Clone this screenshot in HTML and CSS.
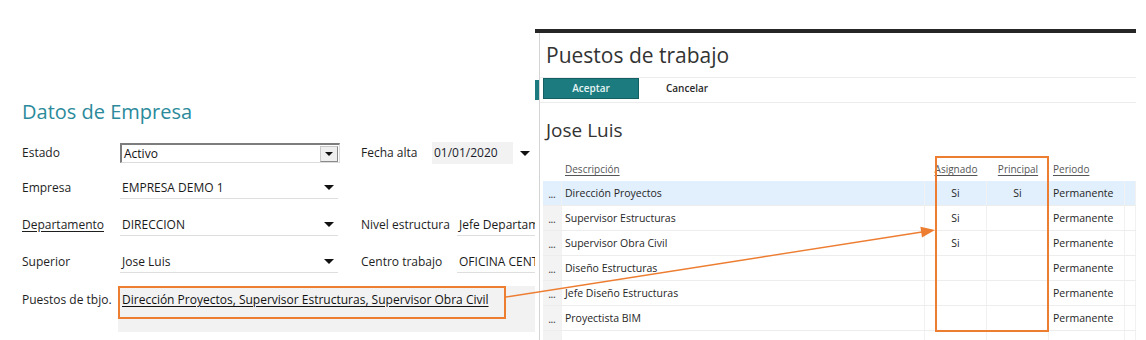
FILE: index.html
```html
<!DOCTYPE html>
<html lang="es">
<head>
<meta charset="utf-8">
<title>Puestos de trabajo</title>
<link rel="stylesheet" href="styles.css">
</head>
<body>
<div class="page">
  <section class="form">
    <h2 class="form-title">Datos de Empresa</h2>

    <div class="row row-1">
      <span class="label">Estado</span>
      <div class="select">
        <span class="select-value">Activo</span>
        <span class="select-btn"><i class="tri tri-sm"></i></span>
      </div>
      <span class="label label-2 label-fecha">Fecha alta</span>
      <div class="date">01/01/2020</div>
      <i class="tri date-tri"></i>
    </div>

    <div class="row">
      <span class="label">Empresa</span>
      <div class="field"><span>EMPRESA DEMO 1</span><i class="tri"></i></div>
    </div>

    <div class="row">
      <span class="label label-link">Departamento</span>
      <div class="field"><span>DIRECCION</span><i class="tri"></i></div>
      <span class="label label-2">Nivel estructura</span>
      <div class="field field-2"><span>Jefe Departamento</span></div>
    </div>

    <div class="row">
      <span class="label">Superior</span>
      <div class="field"><span>Jose Luis</span><i class="tri"></i></div>
      <span class="label label-2">Centro trabajo</span>
      <div class="field field-2"><span>OFICINA CENTRAL</span></div>
    </div>

    <div class="row row-puestos">
      <span class="label label-puestos">Puestos de tbjo.</span>
      <div class="puestos-box">
        <a class="puestos-link">Dirección Proyectos, Supervisor Estructuras, Supervisor Obra Civil</a>
      </div>
    </div>
  </section>

  <section class="dialog">
    <div class="dialog-panel">
      <h1 class="dialog-title">Puestos de trabajo</h1>
      <div class="toolbar">
        <button class="btn btn-primary">Aceptar</button>
        <button class="btn">Cancelar</button>
      </div>
      <h2 class="person">Jose Luis</h2>
      <div class="grid">
        <div class="tr th">
          <span class="td"></span>
          <span class="td"><u>Descripción</u></span>
          <span class="td c"><u>Asignado</u></span>
          <span class="td c"><u>Principal</u></span>
          <span class="td p"><u>Periodo</u></span>
          <span class="td"></span>
        </div>
        <div class="tr sel">
          <span class="td h">...</span>
          <span class="td">Dirección Proyectos</span>
          <span class="td c">Si</span>
          <span class="td c">Si</span>
          <span class="td p">Permanente</span>
          <span class="td"></span>
        </div>
        <div class="tr">
          <span class="td h">...</span>
          <span class="td">Supervisor Estructuras</span>
          <span class="td c">Si</span>
          <span class="td c"></span>
          <span class="td p">Permanente</span>
          <span class="td"></span>
        </div>
        <div class="tr">
          <span class="td h">...</span>
          <span class="td">Supervisor Obra Civil</span>
          <span class="td c">Si</span>
          <span class="td c"></span>
          <span class="td p">Permanente</span>
          <span class="td"></span>
        </div>
        <div class="tr">
          <span class="td h">...</span>
          <span class="td">Diseño Estructuras</span>
          <span class="td c"></span>
          <span class="td c"></span>
          <span class="td p">Permanente</span>
          <span class="td"></span>
        </div>
        <div class="tr">
          <span class="td h">...</span>
          <span class="td">Jefe Diseño Estructuras</span>
          <span class="td c"></span>
          <span class="td c"></span>
          <span class="td p">Permanente</span>
          <span class="td"></span>
        </div>
        <div class="tr">
          <span class="td h">...</span>
          <span class="td">Proyectista BIM</span>
          <span class="td c"></span>
          <span class="td c"></span>
          <span class="td p">Permanente</span>
          <span class="td"></span>
        </div>
        <div class="tr">
          <span class="td h"></span>
          <span class="td"></span>
          <span class="td c"></span>
          <span class="td c"></span>
          <span class="td p"></span>
          <span class="td"></span>
        </div>
      </div>
    </div>
  </section>

  <svg class="annot" width="1146" height="340" viewBox="0 0 1146 340" aria-hidden="true">
    <rect x="119" y="287" width="386" height="31" fill="none" stroke="#ed7d31" stroke-width="2"/>
    <rect x="936" y="157" width="112" height="174" fill="none" stroke="#ed7d31" stroke-width="2"/>
    <line x1="506" y1="297" x2="922" y2="232" stroke="#ed7d31" stroke-width="1.4"/>
    <polygon points="935,230 920.4,226.8 922,237.6" fill="#ed7d31"/>
  </svg>
</div>
</body>
</html>
```

FILE: styles.css
```css
* { box-sizing: border-box; }

html, body {
  margin: 0;
  padding: 0;
  background: #fff;
}

body {
  font-family: "Open Sans", "Noto Sans", sans-serif;
  color: #222;
  width: 1146px;
  height: 340px;
  overflow: hidden;
}

.page {
  position: relative;
  width: 1146px;
  height: 340px;
  overflow: hidden;
}

/* ---------- left form ---------- */
.form {
  padding: 98px 0 0 22px;
  width: 640px;
}

.form-title {
  margin: 0;
  font-size: 20px;
  line-height: 28px;
  font-weight: 400;
  color: #2b8a9b;
  height: 28px;
}

.row {
  display: flex;
  align-items: center;
  height: 37px;
  font-size: 12px;
}

.row-1 {
  margin-top: 11px;
  height: 32px;
}

.label {
  width: 98px;
  flex: none;
  color: #1e1e1e;
  line-height: 16px;
}

.label-link {
  text-decoration: underline;
  text-underline-offset: 2px;
}

.label-2 {
  margin-left: 23px;
}

.label-fecha {
  margin-left: 21px;
  width: 71px;
}

.select {
  width: 220px;
  height: 20px;
  flex: none;
  display: flex;
  align-items: center;
  justify-content: space-between;
  border-top: 2px solid #7d7d7d;
  border-left: 2px solid #7d7d7d;
  border-right: 1px solid #dcdcdc;
  border-bottom: 1px solid #dcdcdc;
  padding-left: 2px;
  color: #111;
}

.select-btn {
  width: 18px;
  height: 16px;
  margin-right: 1px;
  background: #efefef;
  border: 1px solid #c9c9c9;
  border-right-color: #8a8a8a;
  border-bottom-color: #8a8a8a;
  display: flex;
  align-items: center;
  justify-content: center;
}

.tri {
  display: block;
  width: 0;
  height: 0;
  border-left: 5px solid transparent;
  border-right: 5px solid transparent;
  border-top: 5px solid #111;
}

.tri-sm {
  border-left-width: 4px;
  border-right-width: 4px;
  border-top-width: 4px;
}

.date {
  width: 81px;
  height: 22px;
  flex: none;
  background: #f2f2f2;
  padding-left: 2px;
  line-height: 22px;
  color: #1c1c2c;
}

.date-tri {
  margin-left: 7px;
}

.field {
  width: 218px;
  height: 22px;
  flex: none;
  display: flex;
  align-items: center;
  justify-content: space-between;
  padding: 0 4px 0 2px;
  border-bottom: 1px solid #dedede;
  color: #1a1a1a;
}

.field-2 {
  width: 78px;
  margin-left: -2px;
  white-space: nowrap;
  overflow: hidden;
  justify-content: flex-start;
  padding-right: 0;
}

.field-2 span {
  flex: none;
}

.row-puestos {
  margin-top: 6px;
  height: 46px;
  align-items: flex-start;
}

.label-puestos {
  width: 96px;
  padding-top: 6px;
}

.puestos-box {
  width: 417px;
  height: 46px;
  background: #f2f2f2;
  padding: 6px 0 0 4px;
  line-height: 16px;
}

.puestos-link {
  color: #111;
  text-decoration: underline;
  text-underline-offset: 2px;
  white-space: nowrap;
}

/* ---------- dialog ---------- */
.dialog {
  position: absolute;
  left: 535px;
  top: 29px;
  width: 601px;
  height: 311px;
  border-top: 4px solid #262626;
}

.dialog::before {
  content: "";
  position: absolute;
  left: 0;
  top: 47px;
  width: 4px;
  height: 20px;
  background: #1b7b7e;
}

.dialog-panel {
  margin-left: 4px;
  height: 100%;
  background: #fff;
  border-left: 1px solid #d4d4d4;
}

.dialog-title {
  margin: 0;
  padding: 7px 0 7px 6px;
  font-size: 21px;
  line-height: 30px;
  font-weight: 400;
  color: #333;
  border-bottom: 1px solid #ececec;
}

.toolbar {
  display: flex;
  align-items: flex-start;
  height: 25px;
  padding-left: 3px;
  border-bottom: 1px solid #ececec;
}

.btn {
  width: 96px;
  height: 21px;
  margin: 0;
  padding: 0;
  border: 1px solid transparent;
  background: transparent;
  font-family: "Open Sans", "Noto Sans", sans-serif;
  font-size: 10px;
  font-weight: 600;
  color: #2a2a2a;
  line-height: 19px;
}

.btn-primary {
  background: #1b7b7e;
  border-color: #145f62;
  color: #e6f4f4;
}

.person {
  margin: 14px 0 0 0;
  padding-left: 6px;
  font-size: 19px;
  line-height: 26px;
  font-weight: 400;
  color: #333;
}

.grid {
  margin: 14px 0 0 3px;
  width: 593px;
  font-size: 10.5px;
  color: #262626;
}

.tr {
  display: grid;
  grid-template-columns: 19px 363px 62px 62px 76px 1fr;
  height: 25px;
  border-bottom: 1px solid #ededed;
}

.td {
  display: flex;
  align-items: center;
  padding-left: 3px;
  border-right: 1px solid #f1f1f1;
  white-space: nowrap;
  overflow: hidden;
}

.td.c {
  justify-content: center;
  padding-left: 0;
}

.td.p {
  padding-left: 4px;
}

.td.h {
  background: #f3f3f3;
  justify-content: center;
  align-items: flex-end;
  padding: 0 0 6px 0;
  font-size: 8px;
  line-height: 8px;
  font-weight: 700;
  color: #4a4a4a;
}

.th {
  height: 24px;
  border-bottom: none;
  font-size: 10px;
  color: #555;
}

.th .td {
  border-right: none;
}

.th u {
  text-underline-offset: 2px;
}

.sel .td {
  background: #e2effc;
}

.annot {
  position: absolute;
  left: 0;
  top: 0;
  pointer-events: none;
}
```
